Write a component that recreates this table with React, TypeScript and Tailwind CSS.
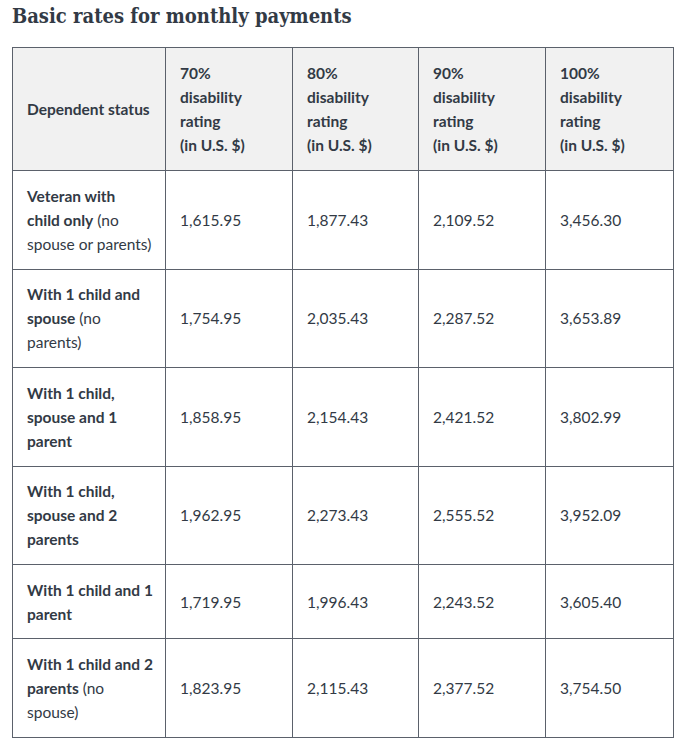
import React from "react";

type Row = {
  status: React.ReactNode;
  values: string[];
};

const rows: Row[] = [
  {
    status: (
      <>
        <b>Veteran with</b>
        <br />
        <b>child only</b> (no
        <br />
        spouse or parents)
      </>
    ),
    values: ["1,615.95", "1,877.43", "2,109.52", "3,456.30"],
  },
  {
    status: (
      <>
        <b>With 1 child and</b>
        <br />
        <b>spouse</b> (no
        <br />
        parents)
      </>
    ),
    values: ["1,754.95", "2,035.43", "2,287.52", "3,653.89"],
  },
  {
    status: (
      <b>
        With 1 child,
        <br />
        spouse and 1
        <br />
        parent
      </b>
    ),
    values: ["1,858.95", "2,154.43", "2,421.52", "3,802.99"],
  },
  {
    status: (
      <b>
        With 1 child,
        <br />
        spouse and 2
        <br />
        parents
      </b>
    ),
    values: ["1,962.95", "2,273.43", "2,555.52", "3,952.09"],
  },
  {
    status: (
      <b>
        With 1 child and 1
        <br />
        parent
      </b>
    ),
    values: ["1,719.95", "1,996.43", "2,243.52", "3,605.40"],
  },
  {
    status: (
      <>
        <b>With 1 child and 2</b>
        <br />
        <b>parents</b> (no
        <br />
        spouse)
      </>
    ),
    values: ["1,823.95", "2,115.43", "2,377.52", "3,754.50"],
  },
];

const ratings = ["70%", "80%", "90%", "100%"];

export default function App() {
  return (
    <div className="min-h-screen bg-white px-3 text-[#323a45]" style={{ fontFamily: "Lato, 'Noto Sans', sans-serif" }}>
      <h2
        className="pt-[1px] text-[20px] font-bold leading-[30px]"
        style={{ fontFamily: "'DejaVu Serif Condensed', 'DejaVu Serif', serif", fontStretch: "condensed" }}
      >
        Basic rates for monthly payments
      </h2>

      <table className="mt-[16px] w-[661px] table-fixed border-collapse text-[15.5px] leading-6">
        <colgroup>
          <col className="w-[153px]" />
          <col className="w-[127px]" />
          <col className="w-[126px]" />
          <col className="w-[127px]" />
          <col className="w-[128px]" />
        </colgroup>
        <thead>
          <tr className="h-[123px] bg-[#f1f1f1]">
            <th className="border border-[#5b616b] px-[14px] text-left font-bold">Dependent status</th>
            {ratings.map((r) => (
              <th key={r} className="border border-[#5b616b] px-[14px] text-left font-bold">
                {r}
                <br />
                disability
                <br />
                rating
                <br />
                (in U.S. $)
              </th>
            ))}
          </tr>
        </thead>
        <tbody>
          {rows.map((row, i) => (
            <tr key={i} className={i === 4 ? "h-[74px]" : "h-[98.5px]"}>
              <td className="whitespace-nowrap border border-[#5b616b] px-[14px]">{row.status}</td>
              {row.values.map((v) => (
                <td key={v} className="border border-[#5b616b] px-[14px]">
                  {v}
                </td>
              ))}
            </tr>
          ))}
        </tbody>
      </table>
    </div>
  );
}
